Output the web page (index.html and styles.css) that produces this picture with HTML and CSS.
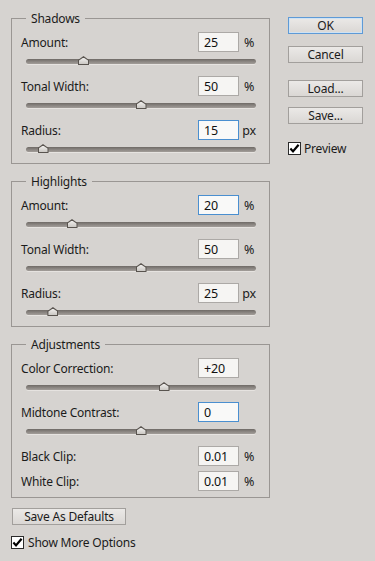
FILE: index.html
```html
<!DOCTYPE html>
<html lang="en">
<head>
    <meta charset="UTF-8">
    <meta name="viewport" content="width=device-width, initial-scale=1.0">
    <title>Shadows/Highlights</title>
    <link rel="stylesheet" href="styles.css">
</head>
<body>
    <div class="dialog">
        <div class="panels">
            <fieldset class="group">
                <legend>Shadows</legend>
                <div class="field">
                    <label>Amount:</label>
                    <input type="text" class="num" value="25">
                    <span class="unit">%</span>
                </div>
                <div class="slider"><div class="track"></div><span class="thumb" style="left: 25%"></span></div>

                <div class="field">
                    <label>Tonal Width:</label>
                    <input type="text" class="num" value="50">
                    <span class="unit">%</span>
                </div>
                <div class="slider"><div class="track"></div><span class="thumb" style="left: 50%"></span></div>

                <div class="field">
                    <label>Radius:</label>
                    <input type="text" class="num active" value="15">
                    <span class="unit">px</span>
                </div>
                <div class="slider last"><div class="track"></div><span class="thumb" style="left: 7.4%"></span></div>
            </fieldset>

            <fieldset class="group">
                <legend>Highlights</legend>
                <div class="field">
                    <label>Amount:</label>
                    <input type="text" class="num active" value="20">
                    <span class="unit">%</span>
                </div>
                <div class="slider"><div class="track"></div><span class="thumb" style="left: 20%"></span></div>

                <div class="field">
                    <label>Tonal Width:</label>
                    <input type="text" class="num" value="50">
                    <span class="unit">%</span>
                </div>
                <div class="slider"><div class="track"></div><span class="thumb" style="left: 50%"></span></div>

                <div class="field">
                    <label>Radius:</label>
                    <input type="text" class="num" value="25">
                    <span class="unit">px</span>
                </div>
                <div class="slider last"><div class="track"></div><span class="thumb" style="left: 11.7%"></span></div>
            </fieldset>

            <fieldset class="group adjust">
                <legend>Adjustments</legend>
                <div class="field">
                    <label>Color Correction:</label>
                    <input type="text" class="num" value="+20">
                    <span class="unit"></span>
                </div>
                <div class="slider"><div class="track"></div><span class="thumb" style="left: 60%"></span></div>

                <div class="field">
                    <label>Midtone Contrast:</label>
                    <input type="text" class="num active" value="0">
                    <span class="unit"></span>
                </div>
                <div class="slider"><div class="track"></div><span class="thumb" style="left: 50%"></span></div>

                <div class="field">
                    <label>Black Clip:</label>
                    <input type="text" class="num" value="0.01">
                    <span class="unit">%</span>
                </div>
                <div class="field clip">
                    <label>White Clip:</label>
                    <input type="text" class="num" value="0.01">
                    <span class="unit">%</span>
                </div>
            </fieldset>

            <button type="button" class="btn defaults">Save As Defaults</button>

            <label class="check more">
                <span class="box">
                    <svg width="11" height="11" viewBox="0 0 11 11"><path d="M1.4 5.6 L4 8.4 L9.6 1.8" fill="none" stroke="#000" stroke-width="2.2"/></svg>
                </span>
                Show More Options
            </label>
        </div>

        <div class="buttons">
            <button type="button" class="btn primary">OK</button>
            <button type="button" class="btn cancel">Cancel</button>
            <button type="button" class="btn load">Load...</button>
            <button type="button" class="btn save">Save...</button>

            <label class="check preview">
                <span class="box">
                    <svg width="11" height="11" viewBox="0 0 11 11"><path d="M1.4 5.6 L4 8.4 L9.6 1.8" fill="none" stroke="#000" stroke-width="2.2"/></svg>
                </span>
                Preview
            </label>
        </div>
    </div>
</body>
</html>
```

FILE: styles.css
```css
body {
    margin: 0;
    padding: 11px 0 0 11px;
    background-color: #d6d3d0;
    font-family: 'Noto Sans', 'Segoe UI', sans-serif;
    font-size: 12px;
    letter-spacing: -0.2px;
    color: #1b1b1b;
}

.dialog {
    display: flex;
    align-items: flex-start;
}

.panels {
    width: 259px;
}

/* Group boxes */
.group {
    margin: 0 0 10px;
    padding: 6px 10px 9px 9px;
    border: 1px solid #9a9693;
    min-width: 0;
}

.group.adjust {
    padding-bottom: 6px;
    margin-bottom: 0;
}

.group legend {
    margin-left: 5px;
    padding: 0 5px;
    line-height: 15px;
}

.field {
    display: flex;
    align-items: center;
    height: 20px;
}

.field label {
    flex: 1;
    line-height: 15px;
}

.field.clip {
    margin-top: 5px;
}

.num {
    width: 41px;
    height: 20px;
    box-sizing: border-box;
    margin: 0;
    padding: 1px 0 0 5px;
    border: 1px solid #aca9a6;
    background-color: #f6f5f3;
    font-family: inherit;
    font-size: 12.5px;
    letter-spacing: inherit;
    color: #111;
    outline: none;
}

.num.active {
    border-color: #4a8fd0;
    background-color: #f9f9f8;
}

.unit {
    width: 20px;
    text-align: center;
    line-height: 15px;
    font-size: 12.5px;
}

/* Sliders */
.slider {
    position: relative;
    height: 10px;
    margin: 4px 3px 10px 5px;
}

.slider.last {
    margin-bottom: 0;
}

.track {
    position: relative;
    top: 3px;
    height: 5px;
    border-radius: 3px;
    background: linear-gradient(#6f6a66, #8f8a86 60%, #a29d99);
    box-shadow: 0 1px 0 #e6e3e0;
}

.thumb {
    position: absolute;
    top: 0;
    width: 11px;
    height: 9px;
    margin-left: -5.5px;
    background: #59544f;
    clip-path: polygon(0 45%, 50% 0, 100% 45%, 100% 100%, 0 100%);
}

.thumb::after {
    content: "";
    position: absolute;
    left: 1px;
    top: 1.5px;
    right: 1px;
    bottom: 1px;
    background: linear-gradient(#f0eeec, #cbc8c4);
    clip-path: polygon(0 45%, 50% 0, 100% 45%, 100% 100%, 0 100%);
}

/* Buttons */
.btn {
    display: block;
    height: 17px;
    padding: 0;
    border: 1px solid #a29f9c;
    background: linear-gradient(#ebe9e7, #dad7d4);
    font-family: inherit;
    font-size: 12px;
    letter-spacing: inherit;
    line-height: 15px;
    color: #1b1b1b;
    cursor: pointer;
}

.btn:hover {
    background: linear-gradient(#f2f1ef, #e2dfdc);
}

.buttons {
    width: 75px;
    margin: 6px 0 0 18px;
}

.buttons .btn {
    width: 75px;
}

.btn.primary {
    border-color: #5e9ad6;
    box-shadow: inset 0 0 0 1px #cfe2f3;
}

.btn.cancel {
    margin-top: 12px;
}

.btn.load {
    margin-top: 17px;
}

.btn.save {
    margin-top: 10px;
}

.btn.defaults {
    width: 114px;
    margin: 10px 0 0 1px;
}

/* Checkboxes */
.check {
    display: flex;
    align-items: center;
    height: 18px;
    gap: 4px;
    line-height: 15px;
}

.check .box {
    display: flex;
    align-items: center;
    justify-content: center;
    width: 13px;
    height: 13px;
    box-sizing: border-box;
    border: 1px solid #2b2b2b;
    background-color: #fff;
}

.check.more {
    margin-top: 8px;
}

.check.preview {
    margin-top: 15px;
    gap: 3px;
}
```
